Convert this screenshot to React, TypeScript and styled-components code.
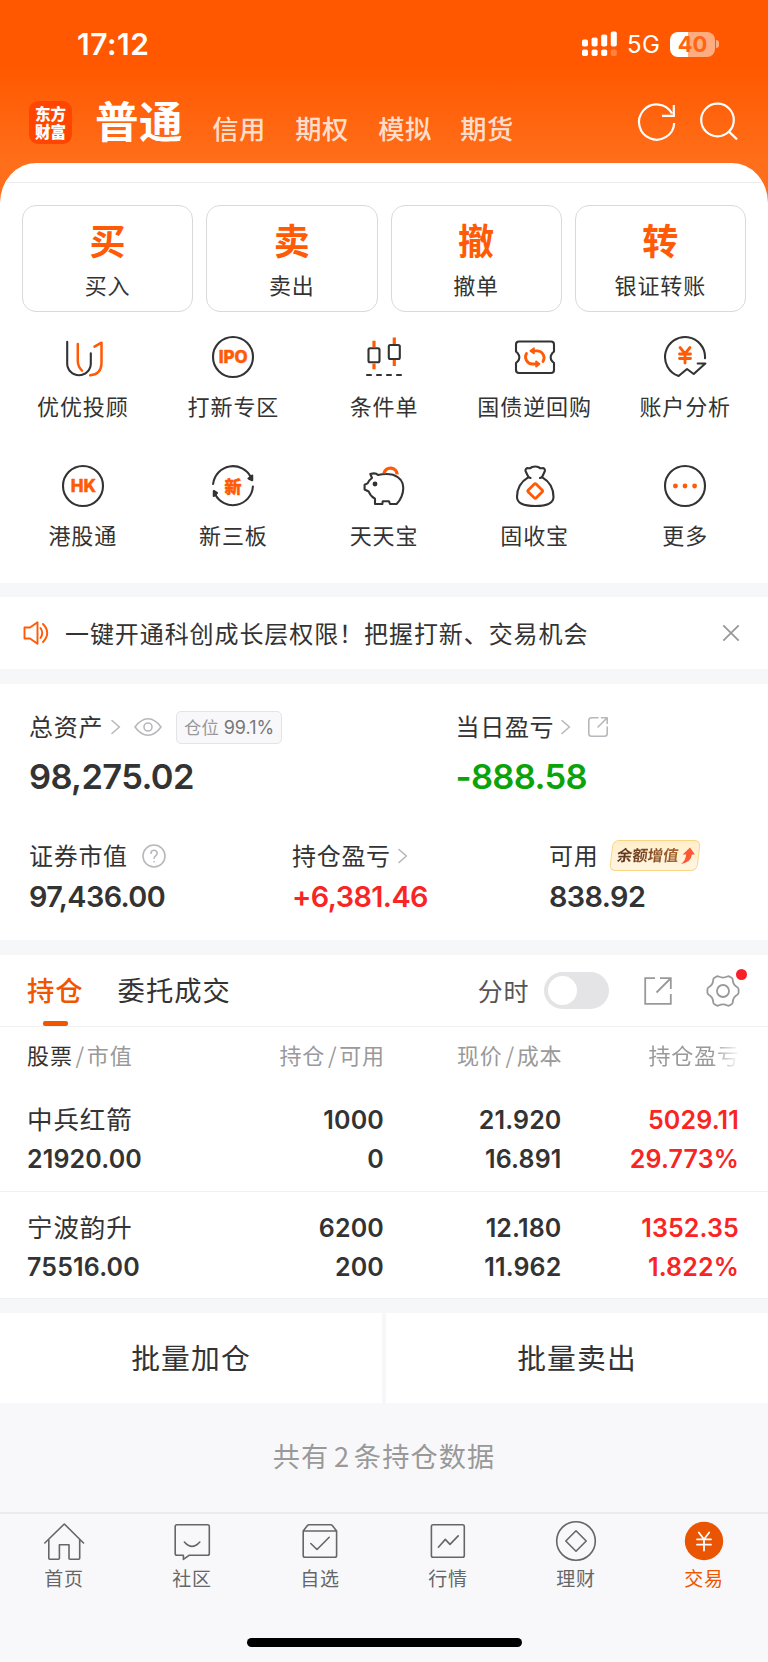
import React from "react";
import styled, { createGlobalStyle } from "styled-components";

const CJK = `"Noto Sans CJK SC", sans-serif`;
const NUM = `Inter, "Noto Sans CJK SC", sans-serif`;
const ORANGE = "#ff5a05";
const DEEP = "#ea5504";
const INK = "#333";
const RED = "#f92424";
const BAND = "#f6f7f9";

const Global = createGlobalStyle`
  * { box-sizing: border-box; }
  body { margin: 0; font-family: ${CJK}; color: ${INK}; background: #f8f8fb; }
`;

const Page = styled.div`
  width: 768px;
  height: 1662px;
  overflow: hidden;
  background: linear-gradient(#ff5800 0, #ff5800 66px, #ff6f1b 164px, #ff6f1b 210px, #f8f8fb 210px);
`;

/* ---------- status bar ---------- */
const StatusBar = styled.div`
  height: 88px;
  padding: 0 49px 0 77px;
  display: flex;
  align-items: center;
  justify-content: space-between;
  color: #fff;
  font-family: ${NUM};
`;
const Clock = styled.span`
  font-size: 30px;
  font-weight: 600;
  line-height: 30px;
  letter-spacing: 0.5px;
`;
const StatusRight = styled.div`
  display: flex;
  align-items: center;
`;
const Network = styled.span`
  font-size: 24px;
  line-height: 26px;
  margin: 2px 10px 0 9px;
  letter-spacing: 0.2px;
`;
const Battery = styled.div`
  width: 45px;
  height: 25px;
  border-radius: 8px;
  background: linear-gradient(90deg, #fff 18px, rgba(255, 255, 255, 0.5) 18px);
  color: #ff6410;
  font-size: 22px;
  font-weight: 700;
  line-height: 25px;
  text-align: center;
`;
const BatteryTip = styled.div`
  width: 3px;
  height: 8px;
  margin-left: 1px;
  border-radius: 0 4px 4px 0;
  background: rgba(255, 255, 255, 0.5);
`;

/* ---------- title bar ---------- */
const TitleBar = styled.div`
  height: 75px;
  padding: 0 28px 0 29px;
  display: flex;
  align-items: flex-start;
`;
const Logo = styled.div`
  width: 43px;
  height: 43px;
  margin-top: 13px;
  padding: 3px 0 0 6px;
  border-radius: 9px;
  background: #ff4500;
  color: #fff;
  font-size: 15.5px;
  font-weight: 900;
  line-height: 18px;
`;
const ActiveAccount = styled.span`
  margin: 7px 0 0 23px;
  font-size: 43.5px;
  font-weight: 700;
  line-height: 50px;
  letter-spacing: 0.6px;
  color: #fff;
`;
const Account = styled.span<{ $gap: number }>`
  margin: 25px 0 0 ${(p) => p.$gap}px;
  width: 53px;
  white-space: nowrap;
  font-size: 26.3px;
  font-weight: 500;
  line-height: 30px;
  letter-spacing: 0.6px;
  color: rgba(255, 255, 255, 0.8);
`;
const TitleIcons = styled.div`
  margin: 12px 0 0 auto;
  display: flex;
  gap: 20px;
`;

/* ---------- sheet ---------- */
const Sheet = styled.main`
  background: #fff;
  border-radius: 36px 36px 0 0 / 40px 40px 0 0;
  overflow: hidden;
`;
const SheetTop = styled.div`
  height: 20px;
  border-bottom: 1px solid #ededed;
`;
const Band = styled.div<{ $h: number }>`
  height: ${(p) => p.$h}px;
  background: ${BAND};
`;

const CardRow = styled.div`
  display: grid;
  grid-template-columns: repeat(4, 1fr);
  gap: 13px;
  padding: 22px 22px 0;
`;
const ActionCard = styled.button`
  height: 107px;
  padding: 0;
  border: 1px solid #d9d9d9;
  border-radius: 14px;
  background: #fff;
  font-family: ${CJK};
  display: flex;
  flex-direction: column;
  align-items: center;
`;
const CardGlyph = styled.span`
  margin-top: 11px;
  font-size: 36px;
  font-weight: 700;
  line-height: 44px;
  color: ${ORANGE};
`;
const CardLabel = styled.span`
  margin-top: 7px;
  font-size: 22px;
  line-height: 32px;
  letter-spacing: 0.9px;
  color: ${INK};
`;

const ShortcutGrid = styled.div`
  display: grid;
  grid-template-columns: repeat(5, 150.6px);
  grid-auto-rows: 129px;
  justify-content: center;
  height: 271px;
  padding-top: 23px;
`;
const Shortcut = styled.div`
  display: flex;
  flex-direction: column;
  align-items: center;
`;
const ShortcutLabel = styled.span`
  margin-top: 10px;
  font-size: 22px;
  line-height: 32px;
  letter-spacing: 0.9px;
`;

const Notice = styled.div`
  height: 72px;
  padding: 0 28px 0 23px;
  display: flex;
  align-items: center;
`;
const NoticeText = styled.span`
  margin: -1px auto 0 16px;
  font-size: 24px;
  line-height: 34px;
  letter-spacing: 0.92px;
`;

/* ---------- assets ---------- */
const Assets = styled.section`
  height: 256px;
  padding: 26px 29px 0;
`;
const AssetTop = styled.div`
  display: grid;
  grid-template-columns: 426.5px 1fr;
  height: 129px;
`;
const AssetBottom = styled.div`
  display: grid;
  grid-template-columns: 263px 257px 1fr;
`;
const LabelLine = styled.div`
  display: flex;
  align-items: center;
  height: 34px;
`;
const Label = styled.span`
  font-size: 24px;
  line-height: 34px;
  letter-spacing: 0.7px;
  margin-top: -2px;
`;
const Amount = styled.div<{ $big?: boolean; $color?: string }>`
  font-family: ${NUM};
  font-weight: 600;
  font-size: ${(p) => (p.$big ? 34.5 : 28.8)}px;
  line-height: 40px;
  letter-spacing: ${(p) => (p.$big ? -0.65 : -0.58)}px;
  margin-top: ${(p) => (p.$big ? 13 : 4)}px;
  color: ${(p) => p.$color || INK};
`;
const PositionTag = styled.span`
  height: 33px;
  margin-left: 13px;
  padding: 0 7px;
  border: 1px solid #e4e4e8;
  border-radius: 5px;
  background: #f8f8fb;
  color: #999;
  font-size: 17.3px;
  line-height: 30px;
  white-space: nowrap;
`;
const TagNumber = styled.span`
  font-family: ${NUM};
  font-size: 18px;
  color: #777;
  margin-left: 5px;
`;
const PromoTag = styled.span`
  display: flex;
  align-items: center;
  gap: 2px;
  width: 88px;
  height: 31px;
  margin: -2px 0 0 13px;
  padding-left: 5px;
  border: 1.5px solid #fbd483;
  border-radius: 6px;
  background: linear-gradient(#ffefcb, #fff5e2);
  transform: skewX(-7deg);
`;
const PromoText = styled.span`
  margin-top: -3px;
  font-size: 15.4px;
  font-weight: 700;
  line-height: 20px;
  white-space: nowrap;
  background: linear-gradient(90deg, #57301c, #ac682f);
  background-clip: text;
  -webkit-background-clip: text;
  color: transparent;
`;

/* ---------- holdings ---------- */
const TabBar = styled.div`
  height: 72px;
  padding: 0 28px 0 27px;
  display: flex;
  align-items: center;
  border-bottom: 1px solid #f0f1f3;
`;
const Tab = styled.div<{ $active?: boolean }>`
  height: 71px;
  margin-right: 34px;
  display: flex;
  flex-direction: column;
  align-items: center;
  font-size: 27.3px;
  line-height: 36px;
  padding-top: 16px;
  letter-spacing: 1px;
  font-weight: ${(p) => (p.$active ? 500 : 400)};
  color: ${(p) => (p.$active ? "#f05500" : INK)};
`;
const TabMark = styled.div`
  width: 25px;
  height: 5px;
  margin-top: 14px;
  border-radius: 2px;
  background: #f05500;
`;
const TabTools = styled.div`
  margin-left: auto;
  display: flex;
  align-items: center;
`;
const ToolLabel = styled.span`
  font-size: 25px;
  line-height: 36px;
  margin: -2px 15px 0 0;
  letter-spacing: 0.6px;
  color: #555;
`;
const Toggle = styled.div`
  width: 65px;
  height: 37px;
  padding: 4px;
  border-radius: 19px;
  background: #e4e4e6;
  margin-right: 34px;
`;
const Knob = styled.div`
  width: 29px;
  height: 29px;
  border-radius: 50%;
  background: #fff;
`;
const GearWrap = styled.div`
  position: relative;
  height: 34px;
  margin-left: 33px;
`;
const RedDot = styled.div`
  position: absolute;
  right: -7px;
  top: -5px;
  width: 11px;
  height: 11px;
  border-radius: 50%;
  background: #f5222a;
`;

const TableRow = styled.div`
  display: grid;
  grid-template-columns: 191px 166px 177.5px 1fr;
  padding: 0 29px 0 27px;
`;
const HeadRow = styled(TableRow)`
  height: 59px;
  padding-bottom: 6px;
  align-items: center;
  font-size: 22px;
  line-height: 34px;
  letter-spacing: 0.9px;
  color: #999;
`;
const HeadCell = styled.span<{ $left?: boolean; $fade?: boolean }>`
  text-align: ${(p) => (p.$left ? "left" : "right")};
  white-space: nowrap;
  margin-right: -1px;
  ${(p) =>
    p.$fade &&
    "-webkit-mask-image: linear-gradient(270deg, transparent 0, #000 28px); mask-image: linear-gradient(270deg, transparent 0, #000 28px);"}
`;
const HeadStrong = styled.b`
  font-weight: 400;
  color: ${INK};
`;
const Slash = styled.i`
  font-style: normal;
  margin: 0 1.6px 0 2.8px;
`;
const StockRow = styled(TableRow)<{ $h: number; $top: number }>`
  height: ${(p) => p.$h}px;
  padding-top: ${(p) => p.$top}px;
  border-bottom: 1px solid #f0f1f3;
`;
const Cell = styled.div<{ $left?: boolean; $color?: string }>`
  display: flex;
  flex-direction: column;
  align-items: ${(p) => (p.$left ? "flex-start" : "flex-end")};
  color: ${(p) => p.$color || INK};
`;
const StockName = styled.span`
  font-size: 25.5px;
  line-height: 34px;
  height: 39px;
  letter-spacing: 0.9px;
`;
const Value = styled.span`
  font-family: ${NUM};
  font-weight: 600;
  font-size: 25px;
  line-height: 39px;
  letter-spacing: 0.15px;
`;

const BatchRow = styled.div`
  display: grid;
  grid-template-columns: 382px 382px;
  gap: 4px;
  background: ${BAND};
`;
const BatchButton = styled.button`
  height: 90px;
  padding: 0 0 3px;
  border: 0;
  background: #fff;
  font-family: ${CJK};
  font-size: 28.8px;
  letter-spacing: 1.1px;
  color: ${INK};
`;
const Summary = styled.div`
  height: 109px;
  line-height: 105px;
  background: #f8f8fb;
  text-align: center;
  font-size: 27.2px;
  letter-spacing: 1.1px;
  color: #999;
`;
const Count = styled.span`
  margin: 0 3.6px 0 4.8px;
`;

/* ---------- bottom navigation ---------- */
const Nav = styled.nav`
  height: 150px;
  border-top: 2px solid #ebebee;
  background: #f8f8fb;
`;
const NavItems = styled.div`
  display: grid;
  grid-template-columns: repeat(6, 128px);
  height: 124px;
  padding-top: 5px;
`;
const NavItem = styled.div<{ $active?: boolean }>`
  display: flex;
  flex-direction: column;
  align-items: center;
  font-size: 19px;
  line-height: 28px;
  letter-spacing: 0.8px;
  color: ${(p) => (p.$active ? "#f05500" : "#666")};
`;
const NavLabel = styled.span`
  margin-top: 1px;
`;
const HomeBar = styled.div`
  width: 275px;
  height: 9px;
  margin: 0 auto;
  border-radius: 5px;
  background: #000;
`;

/* ---------- icons ---------- */
const IconSvg = styled.svg`
  display: block;
  flex: none;
  fill: none;
  stroke: ${INK};
  stroke-width: 2.1;
  stroke-linecap: round;
  stroke-linejoin: round;
`;
const NavSvg = styled(IconSvg)`
  stroke: #666;
  stroke-width: 1.6;
`;
const GreySvg = styled(IconSvg)`
  stroke: #b8b8bc;
  stroke-width: 1.6;
`;
const Tint = styled.g`
  stroke: ${ORANGE};
  stroke-width: 2.5;
`;
const IconText = styled.text`
  stroke: ${ORANGE};
  stroke-width: 0.4;
  fill: ${ORANGE};
  font-family: ${NUM};
  font-size: 17px;
  font-weight: 800;
  text-anchor: middle;
`;
const Ring = () => <circle cx="22" cy="22" r="20" />;

const shortcuts: { label: string; icon: React.ReactNode }[] = [
  {
    label: "优优投顾",
    icon: (
      <>
        <path d="M6.2 6.7V28.5A11.8 11.8 0 0 0 29.8 28.5V18.3" />
        <Tint>
          <path d="M16.8 9V26Q17 32 21 35.6M33.5 11.7L40.5 7.7V28.5Q40 39.6 29.2 40.3" />
        </Tint>
      </>
    ),
  },
  { label: "打新专区", icon: (<><Ring /><IconText x="22.2" y="28">IPO</IconText></>) },
  {
    label: "条件单",
    icon: (
      <>
        <rect x="6.5" y="13.3" width="11" height="14" rx="1.5" />
        <rect x="26.8" y="10" width="11" height="14" rx="1.5" />
        <Tint strokeLinecap="butt">
          <path d="M12 5.7V12.2M12 28.4V34.3M32.3 2.5V9M32.3 25V31" strokeWidth="3.2" />
        </Tint>
        <path d="M5 40H9M15 40H19M25 40H29M35 40H39" />
      </>
    ),
  },
  {
    label: "国债逆回购",
    icon: (
      <>
        <path d="M6 6.5H38Q41 6.5 41 9.5V16.5L39.2 18.3Q36 22.3 39.2 26.3L41 28V35Q41 38 38 38H6Q3 38 3 35V28L4.8 26.3Q8 22.3 4.8 18.3L3 16.5V9.5Q3 6.5 6 6.5Z" />
        <Tint>
          <path d="M20 15.8H24.5A7 7 0 0 1 30 26.5M24 29H19.5A7 7 0 0 1 13.5 18.5" strokeWidth="2.8" />
          <path d="M21 13V18.6L17.2 15.8ZM23 26.2V31.8L26.8 29Z" fill={ORANGE} strokeWidth="1.5" />
        </Tint>
      </>
    ),
  },
  {
    label: "账户分析",
    icon: (
      <>
        <path d="M42 23.3A20 20 0 1 0 15.6 41L24 34L30.7 39L42.3 28.5H34.7" />
        <Tint>
          <path d="M17 12.5L22 18.7L27 12.5M22 18.7V28M16.5 19H27.5M16.5 23.5H27.5" strokeWidth="2.8" />
        </Tint>
      </>
    ),
  },
  { label: "港股通", icon: (<><Ring /><IconText x="22.3" y="28">HK</IconText></>) },
  {
    label: "新三板",
    icon: (
      <>
        <path d="M2.1 20A20 20 0 0 1 40 13.5M41.9 22.5A20 20 0 0 1 4 30" />
        <path d="M41.2 11.5V16.2L37.5 14.5ZM2.8 32V27L6 29Z" fill={INK} />
        <IconText x="22" y="28.6" fontSize="19">新</IconText>
      </>
    ),
  },
  {
    label: "天天宝",
    icon: (
      <>
        <path d="M8.3 10Q13.5 8.3 16 11Q24 9.2 31 10.8Q41.3 14.5 41.3 24Q41 33.5 34.6 40H28L27 37.3H20.8L20.3 40H13V34.8Q8.5 32.5 6.7 27.5L2.6 25.5V20.7L5.6 19.4Q7 16 10 14Z" />
        <circle cx="13" cy="20" r="1.4" fill={INK} />
        <Tint strokeLinecap="butt">
          <path d="M22 9.3A6.7 6.7 0 0 1 35.2 10.3" strokeWidth="3.4" />
        </Tint>
      </>
    ),
  },
  {
    label: "固收宝",
    icon: (
      <>
        <path d="M15.5 13.2L12.5 7Q12.3 3.7 15.5 4.2Q17 4.5 18.6 3.3Q22.2 1.7 25.8 3.3Q27.4 4.5 29 4.2Q32.2 3.7 31.9 7L29 13.2Q40.5 20 40.5 33Q40.5 42 22.2 42Q4 42 4 33Q4 20 15.5 13.2" />
        <path d="M15.5 13.2L17.5 14M29 13.2L27 14" />
        <Tint>
          <rect x="16.6" y="21.4" width="11.2" height="11.2" rx="1.5" transform="rotate(45 22.2 27)" strokeWidth="2.8" />
        </Tint>
      </>
    ),
  },
  {
    label: "更多",
    icon: (
      <>
        <Ring />
        <g fill={ORANGE} stroke="none">
          <circle cx="12.4" cy="22" r="2.4" />
          <circle cx="22" cy="22" r="2.4" />
          <circle cx="31.6" cy="22" r="2.4" />
        </g>
      </>
    ),
  },
];

const navs: { label: string; icon: React.ReactNode; active?: boolean }[] = [
  {
    label: "首页",
    icon: <path d="M2.8 24L22.3 5L41.5 24M6.8 20.8V39.3Q6.8 40.2 7.7 40.2H16.4Q17.4 40.2 17.4 39.2V25.8H27V39.2Q27 40.2 28 40.2H36.7Q37.7 40.2 37.7 39.3V20.8" />,
  },
  {
    label: "社区",
    icon: <path d="M7 5.7H37.5Q39.3 5.7 39.3 7.5V34.5Q39.3 36.3 37.5 36.3H19L13.4 40.4V36.3H7Q5.2 36.3 5.2 34.5V7.5Q5.2 5.7 7 5.7ZM14.4 23Q22 31.8 29.8 23" />,
  },
  {
    label: "自选",
    icon: <path d="M5.2 11.9L9.4 6.4Q10 5.7 11 5.7H32.7Q33.7 5.7 34.3 6.4L38.6 11.9V36.5Q38.6 38.3 36.8 38.3H7Q5.2 38.3 5.2 36.5ZM5.2 12H38.6M12.8 24.5L19 30.5L31.2 18.3" />,
  },
  {
    label: "行情",
    icon: <path d="M7 5.7H36.5Q38.3 5.7 38.3 7.5V36.5Q38.3 38.3 36.5 38.3H7Q5.4 38.3 5.4 36.5V7.5Q5.4 5.7 7 5.7ZM12.4 28.2L19.3 20.4L24 25.4L32.2 16.9" />,
  },
  {
    label: "理财",
    icon: (
      <>
        <circle cx="22" cy="22" r="19.3" />
        <path d="M22 11.8L32.2 22L22 32.2L11.8 22Z" />
      </>
    ),
  },
  {
    label: "交易",
    active: true,
    icon: (
      <>
        <circle cx="22" cy="22" r="19.2" fill={DEEP} stroke="none" />
        <path d="M16.8 13.5L22 20.3L27.2 13.5M22 20.3V31.5M15 20.3H29M15 25.7H29" stroke="#fff" strokeWidth="1.8" />
      </>
    ),
  },
];

const Space = styled.span<{ $w: number }>`
  flex: none;
  width: ${(p) => p.$w}px;
`;

const cards = [
  ["买", "买入"],
  ["卖", "卖出"],
  ["撤", "撤单"],
  ["转", "银证转账"],
];
const stocks = [
  { name: "中兵红箭", value: "21920.00", qty: "1000", free: "0", price: "21.920", cost: "16.891", gain: "5029.11", pct: "29.773%", h: 106, top: 15 },
  { name: "宁波韵升", value: "75516.00", qty: "6200", free: "200", price: "12.180", cost: "11.962", gain: "1352.35", pct: "1.822%", h: 107, top: 17 },
];

const Arrow = () => (
  <GreySvg width="10" height="16" viewBox="0 0 10 16">
    <path d="M1 1.5L8.4 8L1 14.5" />
  </GreySvg>
);

export default function App() {
  return (
    <Page>
      <Global />
      <StatusBar>
        <Clock>17:12</Clock>
        <StatusRight>
          <svg width="36" height="26" viewBox="0 0 36 26" fill="#fff">
            <rect x="0" y="8.5" width="6" height="7" rx="1.8" />
            <rect x="9.6" y="6.5" width="6" height="9" rx="1.8" />
            <rect x="19.2" y="3.5" width="6" height="12" rx="1.8" />
            <rect x="28.8" y="0.5" width="6" height="15" rx="1.8" />
            <rect x="0" y="18.5" width="6" height="6.5" rx="1.8" />
            <rect x="9.6" y="18.5" width="6" height="6.5" rx="1.8" />
            <rect x="19.2" y="18.5" width="6" height="6.5" rx="1.8" />
            <rect x="28.8" y="18.5" width="6" height="6.5" rx="1.8" opacity="0.25" />
          </svg>
          <Network>5G</Network>
          <Battery>40</Battery>
          <BatteryTip />
        </StatusRight>
      </StatusBar>

      <TitleBar>
        <Logo>东方<br />财富</Logo>
        <ActiveAccount>普通</ActiveAccount>
        <Account $gap={29}>信用</Account>
        <Account $gap={30}>期权</Account>
        <Account $gap={30}>模拟</Account>
        <Account $gap={29}>期货</Account>
        <TitleIcons>
          <svg width="42" height="44" viewBox="0 0 42 44" fill="none" stroke="#fff" strokeWidth="2.2">
            <path d="M38.2 23A17.6 17.6 0 1 1 36 13.5M37.8 5V15.8H26" />
          </svg>
          <svg width="42" height="44" viewBox="0 0 42 44" fill="none" stroke="#fff" strokeWidth="2.2">
            <circle cx="19.5" cy="20" r="16.3" />
            <path d="M31 31.6L39 39.4" />
          </svg>
        </TitleIcons>
      </TitleBar>

      <Sheet>
        <SheetTop />
        <CardRow>
          {cards.map(([glyph, label]) => (
            <ActionCard key={label}>
              <CardGlyph>{glyph}</CardGlyph>
              <CardLabel>{label}</CardLabel>
            </ActionCard>
          ))}
        </CardRow>
        <ShortcutGrid>
          {shortcuts.map((s) => (
            <Shortcut key={s.label}>
              <IconSvg width="44" height="44" viewBox="0 0 44 44">{s.icon}</IconSvg>
              <ShortcutLabel>{s.label}</ShortcutLabel>
            </Shortcut>
          ))}
        </ShortcutGrid>
        <Band $h={14} />

        <Notice>
          <IconSvg width="26" height="26" viewBox="0 0 26 26">
            <Tint>
              <path d="M1.5 7.5H7L14.5 2.3V23.7L7 18.5H1.5ZM17.5 8Q21 13 17.5 18M20 4Q28.5 13 20 22" strokeWidth="1.9" />
            </Tint>
          </IconSvg>
          <NoticeText>一键开通科创成长层权限！把握打新、交易机会</NoticeText>
          <svg width="18" height="18" viewBox="0 0 18 18" fill="none" stroke="#999" strokeWidth="1.8">
            <path d="M1.3 1.3L16.7 16.7M16.7 1.3L1.3 16.7" />
          </svg>
        </Notice>
        <Band $h={15} />

        <Assets>
          <AssetTop>
            <div>
              <LabelLine>
                <Label>总资产</Label>
                <Space $w={8} />
                <Arrow />
                <Space $w={12} />
                <GreySvg width="30" height="20" viewBox="0 0 30 20">
                  <path d="M2 10Q8 1.8 15 1.8T28 10Q22 18.2 15 18.2T2 10Z" />
                  <circle cx="15" cy="10" r="4" />
                </GreySvg>
                <PositionTag>仓位<TagNumber>99.1%</TagNumber></PositionTag>
              </LabelLine>
              <Amount $big>98,275.02</Amount>
            </div>
            <div>
              <LabelLine>
                <Label>当日盈亏</Label>
                <Space $w={7} />
                <Arrow />
                <Space $w={16} />
                <GreySvg width="22" height="22" viewBox="0 0 22 22">
                  <path d="M11 1.8H4.5Q1.8 1.8 1.8 4.5V17.5Q1.8 20.2 4.5 20.2H17.5Q20.2 20.2 20.2 17.5V11M14.5 1.8H20.2V7.5M20 2L11 11" />
                </GreySvg>
              </LabelLine>
              <Amount $big $color="#0aa30a">-888.58</Amount>
            </div>
          </AssetTop>
          <AssetBottom>
            <div>
              <LabelLine>
                <Label>证券市值</Label>
                <Space $w={14} />
                <GreySvg width="24" height="24" viewBox="0 0 24 24">
                  <circle cx="12" cy="12" r="11" />
                  <path d="M8.9 9.3Q9.2 6.3 12 6.3T15.2 9.2Q15.2 10.6 13.6 11.8T12.1 14.4M12.1 17.5V17.7" />
                </GreySvg>
              </LabelLine>
              <Amount>97,436.00</Amount>
            </div>
            <div>
              <LabelLine>
                <Label>持仓盈亏</Label>
                <Space $w={7} />
                <Arrow />
              </LabelLine>
              <Amount $color={RED}>+6,381.46</Amount>
            </div>
            <div>
              <LabelLine>
                <Label>可用</Label>
                <PromoTag>
                  <PromoText>余额增值</PromoText>
                  <svg width="14" height="18" viewBox="0 0 14 18">
                    <path d="M8 0.5L13.8 7.5H10.8Q11 15 1 17Q5.5 13.5 5 7.5H1.6Z" fill="#fd5736" />
                  </svg>
                </PromoTag>
              </LabelLine>
              <Amount>838.92</Amount>
            </div>
          </AssetBottom>
        </Assets>
        <Band $h={15} />

        <TabBar>
          <Tab $active>
            持仓
            <TabMark />
          </Tab>
          <Tab>委托成交</Tab>
          <TabTools>
            <ToolLabel>分时</ToolLabel>
            <Toggle><Knob /></Toggle>
            <svg width="30" height="30" viewBox="0 0 30 30" fill="none" stroke="#999" strokeWidth="1.8">
              <path d="M12 2.2H2.2V27.8H27.8V18M17 2.2H27.8V13M27.5 2.5L13.5 16.5" />
            </svg>
            <GearWrap>
              <svg width="34" height="34" viewBox="0 0 34 34" fill="none" stroke="#999" strokeWidth="1.8" strokeLinejoin="round">
                <circle cx="17" cy="17" r="6" />
                <path d="M12.6 2.5Q17 4.6 21.4 2.5Q22.6 1.9 23.8 2.7L25.6 3.8Q26.7 4.5 26.8 6Q27 10.9 31.3 13.3Q32.6 14 32.6 15.5V18.5Q32.6 20 31.3 20.7Q27 23.1 26.8 28Q26.7 29.5 25.6 30.2L23.8 31.3Q22.6 32.1 21.4 31.5Q17 29.4 12.6 31.5Q11.4 32.1 10.2 31.3L8.4 30.2Q7.3 29.5 7.2 28Q7 23.1 2.7 20.7Q1.4 20 1.4 18.5V15.5Q1.4 14 2.7 13.3Q7 10.9 7.2 6Q7.3 4.5 8.4 3.8L10.2 2.7Q11.4 1.9 12.6 2.5Z" />
              </svg>
              <RedDot />
            </GearWrap>
          </TabTools>
        </TabBar>

        <HeadRow>
          <HeadCell $left><HeadStrong>股票</HeadStrong><Slash>/</Slash>市值</HeadCell>
          <HeadCell>持仓<Slash>/</Slash>可用</HeadCell>
          <HeadCell>现价<Slash>/</Slash>成本</HeadCell>
          <HeadCell $fade>持仓盈亏</HeadCell>
        </HeadRow>
        {stocks.map((s) => (
          <StockRow key={s.name} $h={s.h} $top={s.top}>
            <Cell $left><StockName>{s.name}</StockName><Value>{s.value}</Value></Cell>
            <Cell><Value>{s.qty}</Value><Value>{s.free}</Value></Cell>
            <Cell><Value>{s.price}</Value><Value>{s.cost}</Value></Cell>
            <Cell $color={RED}><Value>{s.gain}</Value><Value>{s.pct}</Value></Cell>
          </StockRow>
        ))}
        <Band $h={14} />
        <BatchRow>
          <BatchButton>批量加仓</BatchButton>
          <BatchButton>批量卖出</BatchButton>
        </BatchRow>
      </Sheet>
      <Summary>共有<Count>2</Count>条持仓数据</Summary>

      <Nav>
        <NavItems>
          {navs.map((n) => (
            <NavItem key={n.label} $active={n.active}>
              <NavSvg width="44" height="44" viewBox="0 0 44 44">{n.icon}</NavSvg>
              <NavLabel>{n.label}</NavLabel>
            </NavItem>
          ))}
        </NavItems>
        <HomeBar />
      </Nav>
    </Page>
  );
}
